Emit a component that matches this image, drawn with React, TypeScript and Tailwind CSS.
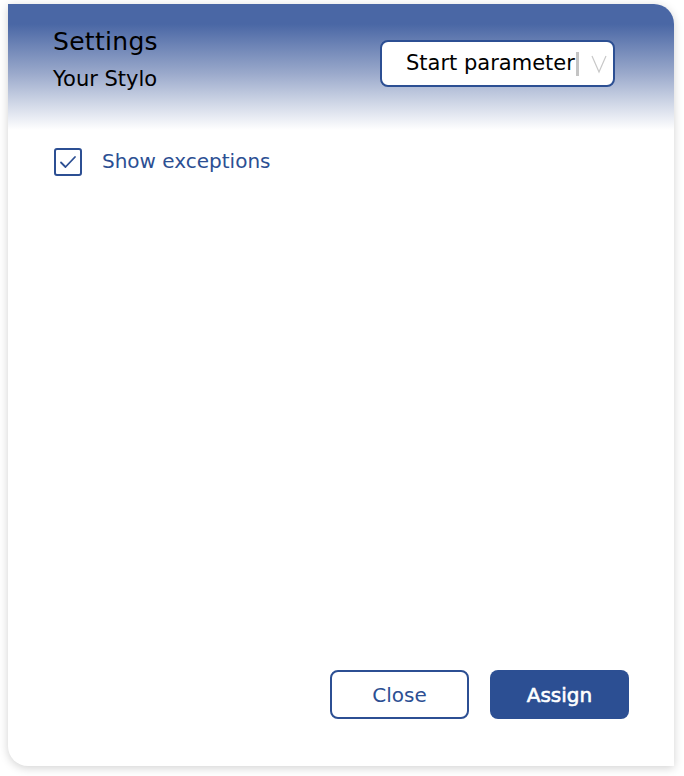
import React, { useState } from "react";

export default function App() {
  const [checked, setChecked] = useState(true);
  return (
    <div className="w-[684px] h-[776px] bg-white" style={{ fontFamily: '"DejaVu Sans", "Noto Sans", sans-serif' }}>
      <div className="ml-[8px] pt-[4px]">
        <div className="w-[666px] h-[762px] bg-white rounded-tr-[20px] rounded-bl-[20px] shadow-[0_2px_10px_rgba(0,0,0,0.18)] flex flex-col overflow-hidden">
          <div className="h-[126px] flex items-start justify-between pl-[45px] pr-[59px] pt-[22px] bg-[linear-gradient(to_bottom,#4a67a5_0%,#4a67a5_16%,#9aa9cb_55%,#ffffff_100%)]">
            <div className="flex flex-col">
              <div className="text-[25px] leading-[32px] text-black tracking-[0.3px]">Settings</div>
              <div className="text-[21px] leading-[26px] text-black mt-[8px]">Your Stylo</div>
            </div>
            <div className="mt-[14px] w-[235px] h-[47px] bg-white border-2 border-[#2c4f93] rounded-[8px] flex items-center pl-[24px] pr-[6px]">
              <span className="text-[21px] text-black leading-none whitespace-nowrap">Start parameter</span>
              <span className="ml-[1px] w-[3px] h-[24px] bg-[#c4c4c4] shrink-0"></span>
              <svg className="ml-[12px] shrink-0" width="16" height="20" viewBox="0 0 16 20" fill="none">
                <path d="M1 2 L8 18 L15 2" stroke="#c8c8c8" strokeWidth="1.2" />
              </svg>
            </div>
          </div>
          <div className="flex-1 flex flex-col px-[46px] pt-[17px] pb-[47px]">
            <label className="flex items-center gap-[20px] cursor-pointer" onClick={() => setChecked(!checked)}>
              <span className="w-[28px] h-[28px] border-2 border-[#2c4f93] rounded-[3px] flex items-center justify-center bg-white">
                {checked && (
                  <svg width="18" height="14" viewBox="0 0 18 14" fill="none">
                    <path d="M2 7.5 L6.5 12 L16 2" stroke="#2c4f93" strokeWidth="1.8" strokeLinecap="round" strokeLinejoin="round" />
                  </svg>
                )}
              </span>
              <span className="text-[20px] text-[#2c4f93] -mt-[1px]">Show exceptions</span>
            </label>
            <div className="flex-1"></div>
            <div className="flex justify-end gap-[21px]">
              <button className="w-[139px] h-[49px] border-2 border-[#2c4f93] rounded-[8px] text-[20px] text-[#2c4f93] bg-white">Close</button>
              <button className="w-[139px] h-[49px] rounded-[8px] text-[20px] text-white bg-[#2c4f93] [-webkit-text-stroke:0.6px_white] mr-[-1px]">Assign</button>
            </div>
          </div>
        </div>
      </div>
    </div>
  );
}
